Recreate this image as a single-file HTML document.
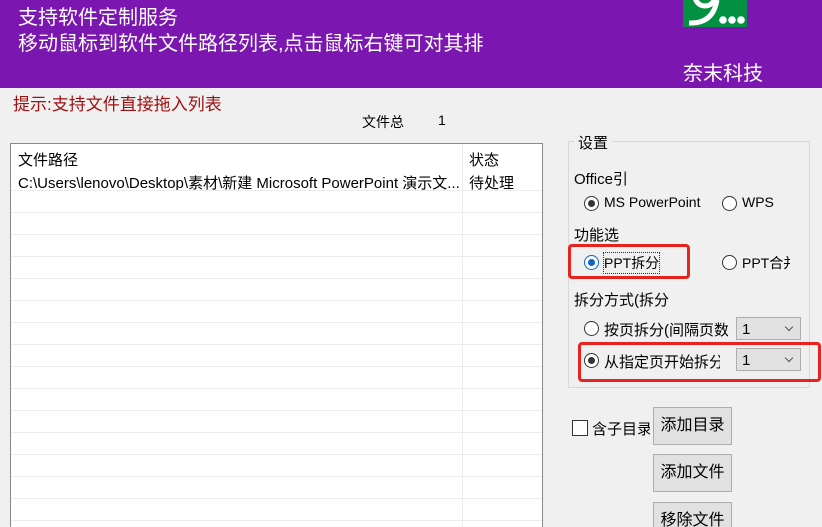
<!DOCTYPE html>
<html><head><meta charset="utf-8"><style>
html,body{margin:0;width:822px;height:527px;overflow:hidden}
body{background:#f0f0f0;font-family:"Liberation Sans","Noto Sans CJK SC",sans-serif;font-size:14px;color:#000;position:relative}
.a{position:absolute;white-space:nowrap}
.hd{position:absolute;left:0;top:0;width:822px;height:88px;background:#7b16b0;color:#fff}
.radio{position:absolute;width:13px;height:13px;border:1px solid #333;border-radius:50%;background:#fff}
.radio.on::after{content:"";position:absolute;left:3px;top:3px;width:7px;height:7px;border-radius:50%;background:#333}
.radio.blue{border-color:#0a64d0}.radio.blue::after{background:#0a64d0}
.combo{position:absolute;width:65px;height:23px;background:#e1e1e1;border:1px solid #adadad;box-sizing:border-box;padding:3px 5px;font-size:15px}
.combo::after{content:"";position:absolute;right:8px;top:6px;width:5px;height:5px;border-right:1px solid #555;border-bottom:1px solid #555;transform:rotate(45deg)}
.btn{position:absolute;width:79px;height:38px;background:#e1e1e1;border:1px solid #adadad;box-sizing:border-box;text-align:center;line-height:36px;font-size:16px}
.red{position:absolute;border:3px solid #e8231f;border-radius:4px;box-sizing:border-box}
</style></head><body>
<div class="hd">
<div class="a" style="left:18px;top:1px;font-size:20px">支持软件定制服务</div>
<div class="a" style="left:18px;top:27px;font-size:20px">移动鼠标到软件文件路径列表,点击鼠标右键可对其排</div>
<div class="a" style="left:683px;top:0;width:64px;height:27px;background:#039040;overflow:hidden">
<svg width="64" height="27"><path d="M6 23 Q30 24 34 0" stroke="#fff" stroke-width="5" fill="none"/><circle cx="22" cy="-4" r="10" stroke="#fff" stroke-width="5" fill="none"/><circle cx="40" cy="20" r="3.8" fill="#fff"/><circle cx="49" cy="20" r="3.8" fill="#fff"/><circle cx="58" cy="20" r="3.8" fill="#fff"/></svg></div>
<div class="a" style="left:683px;top:57px;font-size:20px">奈末科技</div>
</div>
<div class="a" style="left:13px;top:90px;font-size:17px;color:#a01010">提示:支持文件直接拖入列表</div>
<div class="a" style="left:362px;top:112px">文件总</div>
<div class="a" style="left:438px;top:112px">1</div>
<div class="a" style="left:10px;top:143px;width:531px;height:400px;background:#fff;border:1px solid #8a8a8a;overflow:hidden">
<div class="a" style="left:451px;top:0;width:1px;height:400px;background:#ececec"></div>
<div class="a" style="left:7px;top:5px;font-size:15px">文件路径</div>
<div class="a" style="left:458px;top:5px;font-size:15px">状态</div>
<div class="a" style="left:7px;top:28px;font-size:15px">C:\Users\lenovo\Desktop\素材\新建 Microsoft PowerPoint 演示文...</div>
<div class="a" style="left:458px;top:28px;font-size:15px">待处理</div>
<div style="position:absolute;left:0;top:46px;width:531px;height:360px;background:repeating-linear-gradient(#ececec 0 1px,transparent 1px 22px)"></div>
</div>
<div class="a" style="left:568px;top:141px;width:240px;height:245px;border:1px solid #d8d8d8"></div>
<div class="a" style="left:574px;top:132px;padding:0 4px;background:#f0f0f0;font-size:15px">设置</div>
<div class="a" style="left:574px;top:168px;font-size:15px">Office引</div>
<div class="radio on" style="left:584px;top:196px"></div><div class="a" style="left:604px;top:194px">MS PowerPoint</div>
<div class="radio" style="left:722px;top:196px"></div><div class="a" style="left:742px;top:194px">WPS</div>
<div class="a" style="left:574px;top:224px;font-size:15px">功能选</div>
<div class="radio on blue" style="left:584px;top:255px"></div><div class="a" style="left:604px;top:253px;outline:1px dotted #333">PPT拆分</div>
<div class="radio" style="left:722px;top:255px"></div><div class="a" style="left:742px;top:253px;width:48px;overflow:hidden">PPT合并</div>
<div class="red" style="left:568px;top:244px;width:122px;height:35px"></div>
<div class="a" style="left:574px;top:289px;font-size:15px">拆分方式(拆分</div>
<div class="radio" style="left:584px;top:321px"></div><div class="a" style="left:604px;top:319px;width:124px;overflow:hidden;font-size:15px">按页拆分(间隔页数</div>
<div class="combo" style="left:736px;top:317px">1</div>
<div class="radio on" style="left:584px;top:353px"></div><div class="a" style="left:604px;top:351px;width:116px;overflow:hidden;font-size:15px">从指定页开始拆分</div>
<div class="combo" style="left:736px;top:348px">1</div>
<div class="red" style="left:578px;top:342px;width:243px;height:40px"></div>
<div class="a" style="left:572px;top:420px;width:14px;height:14px;border:1px solid #333;background:#fff"></div>
<div class="a" style="left:592px;top:418px;width:58px;overflow:hidden;font-size:15px">含子目录</div>
<div class="btn" style="left:653px;top:407px">添加目录</div>
<div class="btn" style="left:653px;top:454px">添加文件</div>
<div class="btn" style="left:653px;top:502px">移除文件</div>
</body></html>
